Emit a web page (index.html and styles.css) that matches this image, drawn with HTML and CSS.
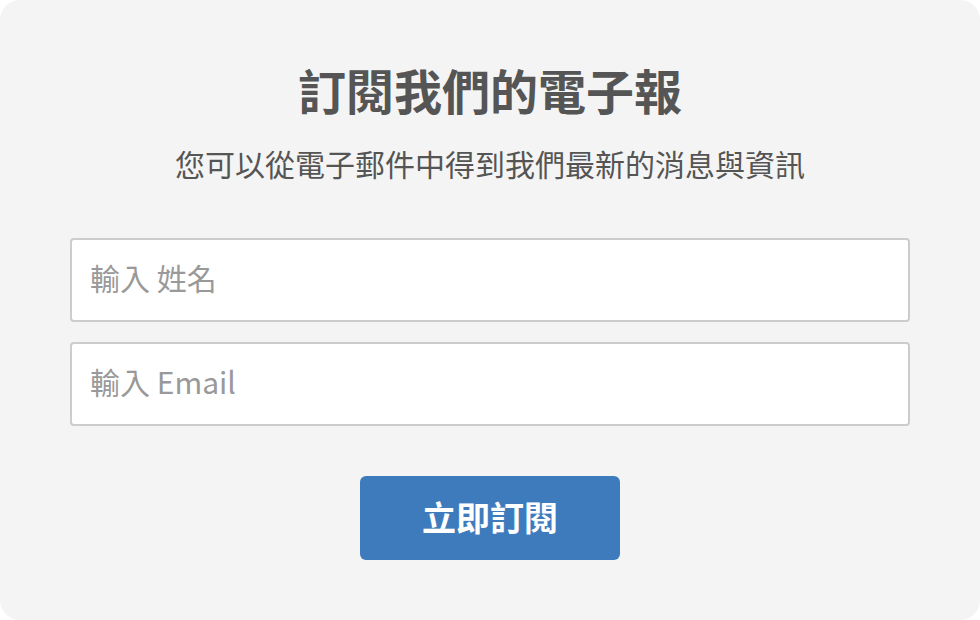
FILE: index.html
```html
<!DOCTYPE html>
<html lang="zh-Hant">
<head>
    <meta charset="UTF-8">
    <meta name="viewport" content="width=device-width, initial-scale=1.0">
    <title>訂閱我們的電子報</title>
    <link rel="stylesheet" href="styles.css">
</head>
<body>

    <div class="subscribe-card">
        <h1 class="title">訂閱我們的電子報</h1>
        <p class="subtitle">您可以從電子郵件中得到我們最新的消息與資訊</p>

        <form class="subscribe-form" onsubmit="return false;">
            <input type="text" class="input-field" placeholder="輸入 姓名">
            <input type="email" class="input-field" placeholder="輸入 Email">
            <button type="submit" class="submit-button">立即訂閱</button>
        </form>
    </div>

</body>
</html>
```

FILE: styles.css
```css
html, body {
    margin: 0;
    background-color: #ffffff;
}
body {
    font-family: "Noto Sans CJK TC", "Noto Sans", sans-serif;
}
.subscribe-card {
    box-sizing: border-box;
    width: 980px;
    height: 620px;
    padding: 53px 70px 0;
    background-color: #f4f4f4;
    border-radius: 20px;
    text-align: center;
}
.title {
    margin: 0;
    font-size: 48px;
    line-height: 72px;
    font-weight: bold;
    color: #555555;
}
.subtitle {
    margin: 16px 0 0;
    font-size: 30px;
    line-height: 45px;
    color: #555555;
}
.subscribe-form {
    display: flex;
    flex-direction: column;
    align-items: center;
    gap: 20px;
    margin-top: 52px;
}
.input-field {
    box-sizing: border-box;
    width: 100%;
    height: 84px;
    padding: 0 18px 6px;
    border: 2px solid #cccccc;
    border-radius: 4px;
    background-color: #ffffff;
    font-family: inherit;
    font-size: 30px;
    color: #555555;
    outline: none;
}
.input-field::placeholder {
    color: #999999;
}
.submit-button {
    width: 260px;
    height: 84px;
    margin-top: 30px;
    padding: 0 0 4px;
    border: none;
    border-radius: 6px;
    background-color: #3e7bbd;
    color: #ffffff;
    font-family: inherit;
    font-size: 34px;
    font-weight: bold;
    cursor: pointer;
}
```
